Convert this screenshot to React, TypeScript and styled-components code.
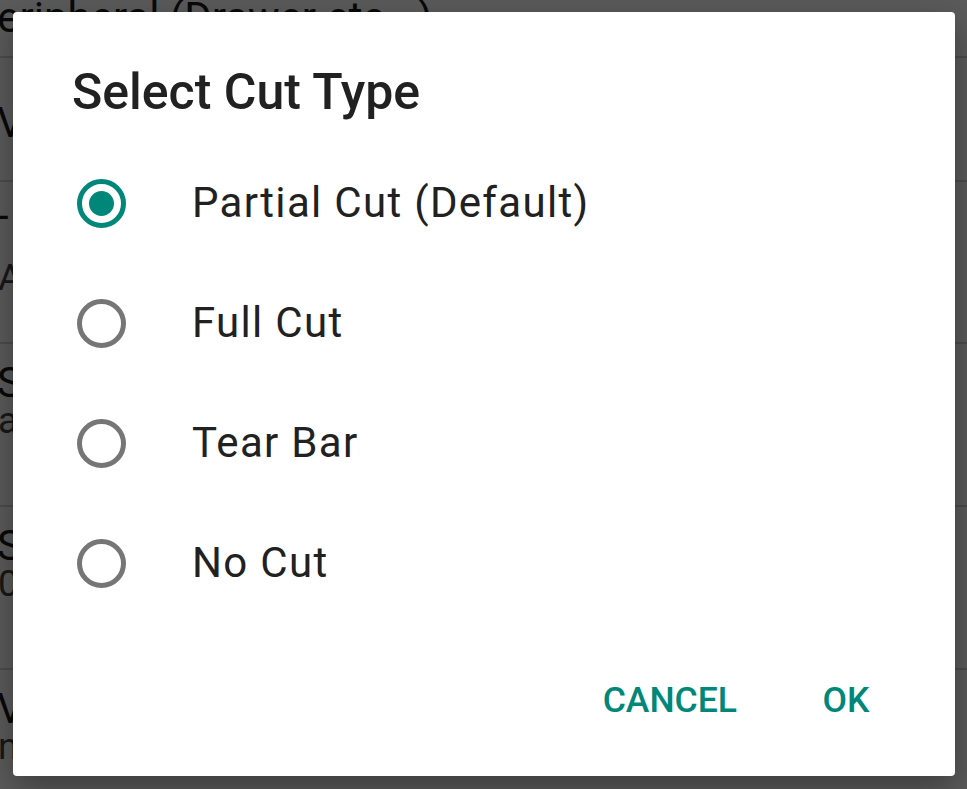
import styled, { createGlobalStyle } from 'styled-components';

const GlobalStyle = createGlobalStyle`
  html, body {
    margin: 0;
    padding: 0;
    background: #ffffff;
    font-family: Roboto, "Noto Sans", "Liberation Sans", sans-serif;
  }
  * {
    box-sizing: border-box;
  }
`;

const TEAL = '#00877a';

const Page = styled.div`
  position: relative;
  width: 967px;
  height: 789px;
  overflow: hidden;
  background: #ffffff;
`;

/* settings list that sits behind the dialog */
const BgList = styled.div`
  display: flex;
  flex-direction: column;
  color: #1a1a1a;
`;

const BgHeader = styled.div`
  height: 58px;
  border-bottom: 2px solid #d4d4d4;
  font-size: 42px;
  line-height: 35px;
  text-indent: -29px;
  white-space: nowrap;
`;

const BgRow = styled.div<{ $height: number; $top: number }>`
  height: ${(p) => p.$height}px;
  padding-top: ${(p) => p.$top}px;
  border-bottom: 2px solid #d4d4d4;
  display: flex;
  flex-direction: column;
  white-space: nowrap;
`;

const BgTitle = styled.div`
  font-size: 42px;
  line-height: 42px;
  text-indent: -3px;
`;

const BgSub = styled.div<{ $gap?: number }>`
  margin-top: ${(p) => p.$gap ?? 0}px;
  font-size: 37px;
  line-height: 34px;
  text-indent: -2px;
  color: #444;
`;

const Scrim = styled.div`
  position: absolute;
  inset: 0;
  background: rgba(0, 0, 0, 0.645);
  display: flex;
  padding: 12px 12px 13px 13px;
`;

const Dialog = styled.div`
  flex: 1;
  display: flex;
  flex-direction: column;
  background: #ffffff;
  border-radius: 4px;
  box-shadow: 0 12px 34px rgba(0, 0, 0, 0.35);
  padding: 51px 25px 26px 0;
`;

const Title = styled.h1`
  margin: 0 0 0 59px;
  font-size: 50px;
  line-height: 59px;
  font-weight: 500;
  color: #212121;
`;

const OptionList = styled.div`
  margin-top: 21px;
  display: flex;
  flex-direction: column;
`;

const Option = styled.label`
  height: 120px;
  display: flex;
  align-items: center;
  gap: 66px;
  padding-left: 64px;
  cursor: pointer;
`;

const Radio = styled.span<{ $checked: boolean }>`
  width: 49px;
  height: 49px;
  flex: none;
  border-radius: 50%;
  border: 5px solid ${(p) => (p.$checked ? TEAL : '#767676')};
  display: grid;
  place-items: center;

  &::after {
    content: '';
    width: 25px;
    height: 25px;
    border-radius: 50%;
    background: ${TEAL};
    display: ${(p) => (p.$checked ? 'block' : 'none')};
  }
`;

const OptionLabel = styled.span`
  font-size: 42px;
  line-height: 50px;
  letter-spacing: 0.03125em;
  color: #212121;
`;

const ButtonBar = styled.div`
  margin-top: auto;
  height: 100px;
  display: flex;
  justify-content: flex-end;
  align-items: center;
  gap: 4px;
`;

const TextButton = styled.button`
  min-width: 168px;
  height: 96px;
  padding: 0 21px;
  border: 0;
  background: transparent;
  font-family: inherit;
  font-size: 35.5px;
  font-weight: 500;
  color: ${TEAL};
  text-transform: uppercase;
  cursor: pointer;
`;

const options = ['Partial Cut (Default)', 'Full Cut', 'Tear Bar', 'No Cut'];

export default function App() {
  const selected = 0;

  return (
    <Page>
      <GlobalStyle />
      <BgList>
        <BgHeader>Peripheral (Drawer etc...)</BgHeader>
        <BgRow $height={124} $top={44}>
          <BgTitle>Vibration</BgTitle>
        </BgRow>
        <BgRow $height={162} $top={13}>
          <BgTitle>- Label Settings -</BgTitle>
          <BgSub $gap={24}>AT commands</BgSub>
        </BgRow>
        <BgRow $height={163} $top={18}>
          <BgTitle>Select Printer</BgTitle>
          <BgSub>android.hardware.usb</BgSub>
        </BgRow>
        <BgRow $height={163} $top={18}>
          <BgTitle>Serial Port</BgTitle>
          <BgSub>0 (Default)</BgSub>
        </BgRow>
        <BgRow $height={163} $top={18}>
          <BgTitle>Vertical Offset</BgTitle>
          <BgSub>nil</BgSub>
        </BgRow>
      </BgList>

      <Scrim>
        <Dialog>
          <Title>Select Cut Type</Title>
          <OptionList>
            {options.map((label, i) => (
              <Option key={label}>
                <Radio $checked={i === selected} />
                <OptionLabel>{label}</OptionLabel>
              </Option>
            ))}
          </OptionList>
          <ButtonBar>
            <TextButton>Cancel</TextButton>
            <TextButton>OK</TextButton>
          </ButtonBar>
        </Dialog>
      </Scrim>
    </Page>
  );
}
